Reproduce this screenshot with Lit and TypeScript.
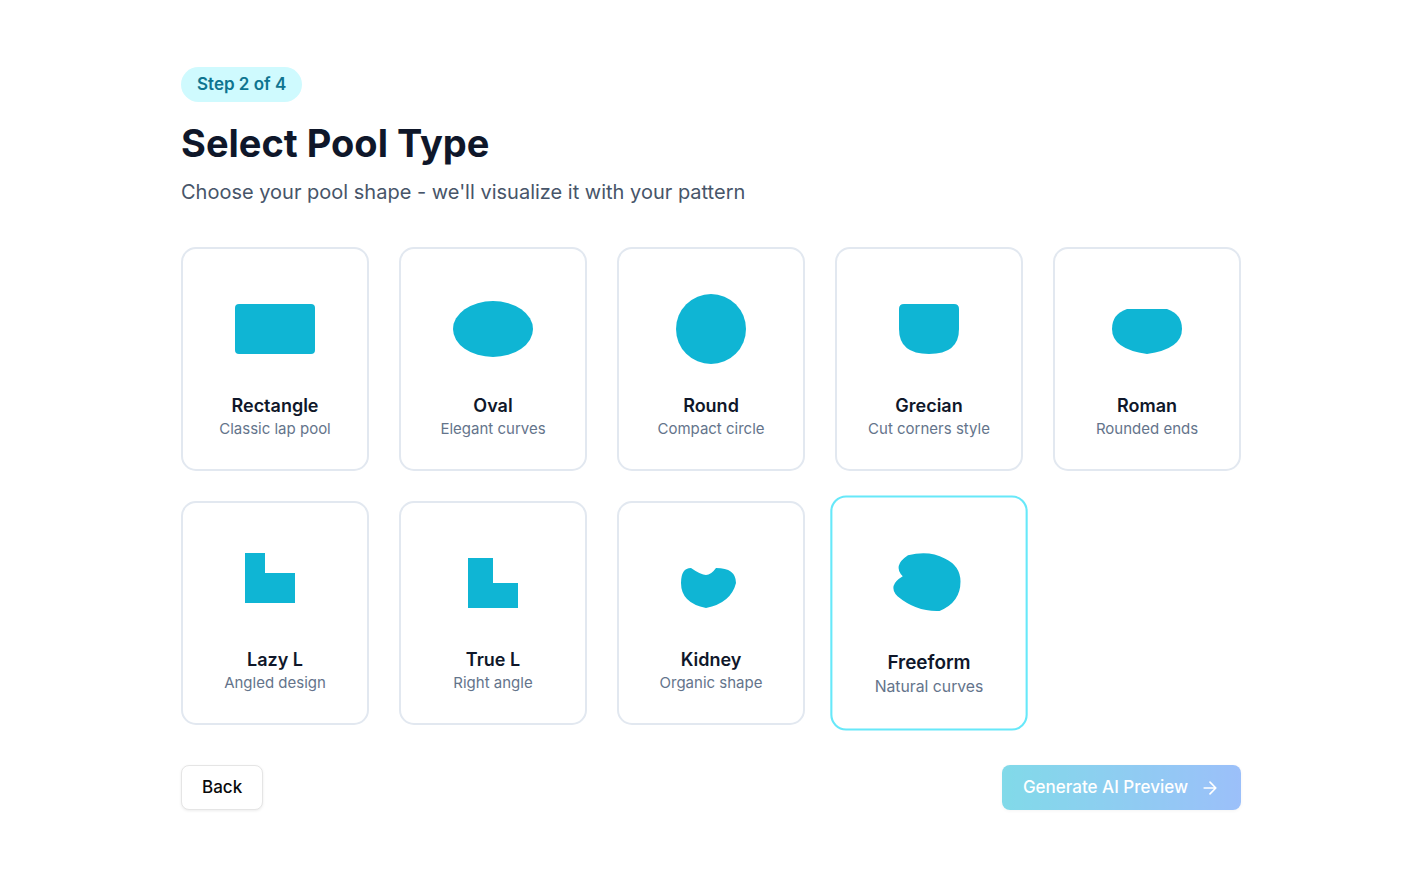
import { LitElement, html, css, svg } from "lit";
import { customElement, state } from "lit/decorators.js";
import { classMap } from "lit/directives/class-map.js";

const pools = [
  { id: "rectangle", name: "Rectangle", note: "Classic lap pool", shape: svg`<rect x="10" y="25" width="80" height="50" rx="4" />` },
  { id: "oval", name: "Oval", note: "Elegant curves", shape: svg`<ellipse cx="50" cy="50" rx="40" ry="28" />` },
  { id: "round", name: "Round", note: "Compact circle", shape: svg`<circle cx="50" cy="50" r="35" />` },
  { id: "grecian", name: "Grecian", note: "Cut corners style", shape: svg`<path d="M20 30Q20 25 25 25L75 25Q80 25 80 30L80 50Q80 75 50 75Q20 75 20 50Z" />` },
  { id: "roman", name: "Roman", note: "Rounded ends", shape: svg`<path d="M30 30Q15 35 15 50Q15 70 50 75Q85 70 85 50Q85 35 70 30Z" />` },
  { id: "lazy-l", name: "Lazy L", note: "Angled design", shape: svg`<path d="M20 20H40V40H70V70H20Z" />` },
  { id: "true-l", name: "True L", note: "Right angle", shape: svg`<path d="M25 25H50V50H75V75H25Z" />` },
  { id: "kidney", name: "Kidney", note: "Organic shape", shape: svg`<path d="M30 35Q20 35 20 50Q20 70 45 75Q70 70 75 50Q75 35 55 35Q50 42 45 42Q40 42 30 35Z" />` },
  { id: "freeform", name: "Freeform", note: "Natural curves", shape: svg`<path d="M30 25Q50 20 65 28Q80 35 80 50Q80 70 60 78Q38 79 20 64Q10 54 25 45Q15 35 30 25Z" />` },
];

@customElement("app-root")
export class AppRoot extends LitElement {
  @state() private active = "freeform";

  static styles = css`
    :host {
      display: block;
      min-height: 100vh;
      background: #fff;
      color: #0f172a;
      font-family: Inter, "Liberation Sans", sans-serif;
    }
    *, *::before, *::after { box-sizing: border-box; }
    .page { padding: 67px 164px 40px 181px; }
    .badge {
      display: block;
      width: fit-content;
      padding: 5px 16px;
      border-radius: 20px;
      background: #cffafe;
      color: #0e7490;
      font-size: 17px;
      font-weight: 600;
      line-height: 25px;
    }
    .title {
      margin: 20px 0 12px;
      font-size: 38px;
      font-weight: 700;
      line-height: 43px;
    }
    .lead {
      margin: 0 0 40px;
      color: #475569;
      font-size: 20px;
      line-height: 30px;
    }
    .grid {
      display: grid;
      grid-template-columns: repeat(5, minmax(0, 1fr));
      gap: 30px;
    }
    .card {
      display: flex;
      flex-direction: column;
      align-items: center;
      margin: 0;
      padding: 30px 0;
      border: 2px solid #e2e8f0;
      border-radius: 15px;
      background: #fff;
      color: inherit;
      font-family: inherit;
      cursor: pointer;
    }
    .card.active {
      border-color: #67e8f9;
      transform: scale(1.05);
    }
    .shape {
      display: block;
      width: 100px;
      height: 100px;
      margin-bottom: 15px;
      fill: #0fb5d4;
    }
    .name {
      margin-bottom: 2px;
      font-size: 18px;
      font-weight: 600;
      line-height: 23px;
    }
    .note { color: #64748b; font-size: 15px; line-height: 20px; }
    .actions {
      display: flex;
      justify-content: space-between;
      margin-top: 40px;
    }
    .btn {
      display: flex;
      align-items: center;
      gap: 12px;
      height: 45px;
      padding: 0 20px;
      border: 1px solid transparent;
      border-radius: 8px;
      font-family: inherit;
      font-size: 17px;
      font-weight: 500;
      line-height: 25px;
      box-shadow: 0 1px 3px rgba(0, 0, 0, 0.08);
    }
    .back { border-color: #e5e5e5; background: #fff; color: #0a0a0a; }
    .next {
      border-width: 0;
      padding: 0 21px;
      background: linear-gradient(to right, #06b6d4, #3b82f6);
      color: #fff;
      opacity: 0.5;
    }
    .arrow {
      width: 20px;
      height: 20px;
      fill: none;
      stroke: currentColor;
      stroke-width: 2;
      stroke-linecap: round;
      stroke-linejoin: round;
    }
  `;

  render() {
    return html`
      <main class="page">
        <header>
          <span class="badge">Step 2 of 4</span>
          <h1 class="title">Select Pool Type</h1>
          <p class="lead">Choose your pool shape - we'll visualize it with your pattern</p>
        </header>
        <section class="grid" aria-label="Pool type">
          ${pools.map(
            (p) => html`
              <button
                type="button"
                class=${classMap({ card: true, active: p.id === this.active })}
                @click=${() => (this.active = p.id)}
              >
                <svg class="shape" viewBox="0 0 100 100" aria-hidden="true">${p.shape}</svg>
                <span class="name">${p.name}</span>
                <span class="note">${p.note}</span>
              </button>
            `
          )}
        </section>
        <footer class="actions">
          <button type="button" class="btn back">Back</button>
          <button type="button" class="btn next" disabled>
            Generate AI Preview
            <svg class="arrow" viewBox="0 0 24 24" aria-hidden="true"><path d="M5 12h14M12 5l7 7-7 7" /></svg>
          </button>
        </footer>
      </main>
    `;
  }
}
